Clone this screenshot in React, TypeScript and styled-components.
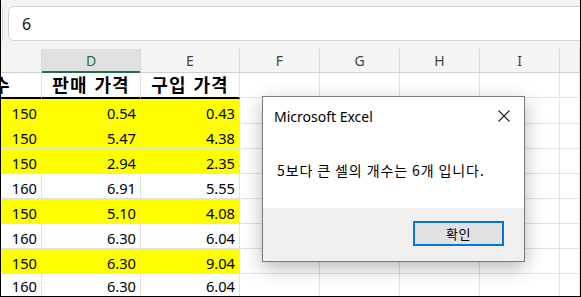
import React from "react";
import styled, { createGlobalStyle } from "styled-components";

const GlobalStyle = createGlobalStyle`
  html, body { margin: 0; padding: 0; background: #fff; }
  * { box-sizing: border-box; }
`;

const COLS = "41px 99px 99px 80px 80px 80px 80px 1fr";
const GRID = "#e1e1e1";
const SANS = `"Noto Sans", "Noto Sans CJK KR", sans-serif`;
const KR = `"Noto Sans CJK KR", "Noto Sans", sans-serif`;

const Frame = styled.div`
  position: relative;
  width: 581px;
  height: 297px;
  overflow: hidden;
  background: #fff;
  border-left: 1px solid #000;
  border-right: 1px solid #000;
  border-bottom: 1px solid #000;
  display: flex;
  flex-direction: column;
`;

const TopBar = styled.div`
  height: 49px;
  flex: none;
  background: #f3f3f3;
  display: flex;
  align-items: flex-start;
  padding-top: 6px;
`;

const NameBoxEdge = styled.div`
  width: 2px;
  height: 35px;
  border: 1px solid #d3d3d3;
  border-left: none;
  border-radius: 0 6px 6px 0;
  background: #fff;
  margin-right: 5px;
`;

const FormulaBox = styled.div`
  flex: 1;
  height: 35px;
  margin-right: -12px;
  background: #fff;
  border: 1px solid #d3d3d3;
  border-radius: 6px;
  display: flex;
  align-items: center;
  padding-left: 13px;
  font-family: ${SANS};
  font-size: 16px;
  color: #111;
`;

const HeaderRow = styled.div`
  display: grid;
  grid-template-columns: ${COLS};
  height: 24px;
  flex: none;
  background: #f5f5f5;
  border-bottom: 1px solid #d0d0d0;
`;

const ColHead = styled.div<{ $sel?: boolean }>`
  display: flex;
  align-items: center;
  justify-content: center;
  border-right: 1px solid #dadada;
  font-family: ${SANS};
  font-size: 14px;
  line-height: 1;
  color: ${(p) => (p.$sel ? "#1e7145" : "#444")};
  background: ${(p) => (p.$sel ? "#e0e0e0" : "transparent")};
  box-shadow: ${(p) => (p.$sel ? "inset 0 -2px 0 #1e7145" : "none")};
  margin-bottom: ${(p) => (p.$sel ? "-1px" : "0")};
`;

const Row = styled.div<{ $h: number }>`
  display: grid;
  grid-template-columns: ${COLS};
  height: ${(p) => p.$h}px;
  flex: none;
`;

const Cell = styled.div<{ $fill?: boolean; $last?: boolean }>`
  display: flex;
  align-items: flex-end;
  justify-content: flex-end;
  padding-right: 4px;
  font-family: ${SANS};
  font-size: 14.67px;
  line-height: 20px;
  color: #000;
  white-space: nowrap;
  background: ${(p) => (p.$fill ? "#ffff00" : "#fff")};
  border-right: 1px solid ${(p) => (p.$fill ? "#ffff00" : GRID)};
  border-bottom: ${(p) => (p.$last ? "none" : `1px solid ${GRID}`)};
`;

const EmptyCell = styled.div<{ $gap?: boolean; $last?: boolean }>`
  border-right: 1px solid ${GRID};
  border-bottom: ${(p) => (p.$last ? "none" : `1px solid ${GRID}`)};
  margin-bottom: ${(p) => (p.$gap ? "1px" : "0")};
`;

const TitleCell = styled.div<{ $clip?: boolean }>`
  display: flex;
  align-items: flex-start;
  justify-content: ${(p) => (p.$clip ? "flex-start" : "center")};
  overflow: ${(p) => (p.$clip ? "hidden" : "visible")};
  white-space: nowrap;
  font-family: ${KR};
  font-weight: 700;
  font-size: 18px;
  line-height: 22px;
  letter-spacing: 1px;
  word-spacing: 2px;
  color: #000;
  border-right: 1px solid ${GRID};
  border-bottom: 2px solid #000;
`;

const ClipText = styled.span`
  margin-left: -8px;
`;

const Dialog = styled.div`
  position: absolute;
  left: 261px;
  top: 96px;
  width: 263px;
  height: 166px;
  background: #fff;
  border: 1px solid #7a7a7a;
  box-shadow: 0 6px 18px rgba(0, 0, 0, 0.28);
  display: flex;
  flex-direction: column;
`;

const DialogTitle = styled.div`
  height: 38px;
  flex: none;
  display: flex;
  align-items: center;
  justify-content: space-between;
  padding: 0 14px 0 11px;
  font-family: ${SANS};
  font-size: 14px;
  color: #000;
`;

const Message = styled.div`
  flex: 1;
  display: flex;
  align-items: center;
  padding: 0 0 3px 14px;
  font-family: ${KR};
  font-size: 14px;
  letter-spacing: 0.9px;
  color: #000;
`;

const Footer = styled.div`
  height: 53px;
  flex: none;
  background: #f0f0f0;
  display: flex;
  justify-content: flex-end;
  align-items: flex-start;
  padding: 13px 20px 0 0;
`;

const OkButton = styled.div`
  width: 91px;
  height: 25px;
  border: 2px solid #0078d7;
  background: #e1e1e1;
  display: flex;
  align-items: center;
  justify-content: center;
  font-family: ${KR};
  font-size: 13px;
  letter-spacing: 0.5px;
  color: #000;
`;

const CloseIcon = () => (
  <svg width="12" height="12" viewBox="0 0 12 12">
    <path d="M0.5 0.5 L11.5 11.5 M11.5 0.5 L0.5 11.5" stroke="#222" strokeWidth="1.1" fill="none" />
  </svg>
);

const data = [
  { c: "150", d: "0.54", e: "0.43", y: true },
  { c: "150", d: "5.47", e: "4.38", y: true },
  { c: "150", d: "2.94", e: "2.35", y: true },
  { c: "160", d: "6.91", e: "5.55", y: false },
  { c: "150", d: "5.10", e: "4.08", y: true },
  { c: "160", d: "6.30", e: "6.04", y: false },
  { c: "150", d: "6.30", e: "9.04", y: true },
  { c: "160", d: "6.30", e: "6.04", y: false },
];

const letters = ["", "D", "E", "F", "G", "H", "I", ""];

export default function App() {
  return (
    <>
      <GlobalStyle />
      <Frame>
        <TopBar>
          <NameBoxEdge />
          <FormulaBox>6</FormulaBox>
        </TopBar>
        <HeaderRow>
          {letters.map((l, i) => (
            <ColHead key={i} $sel={l === "D"}>
              {l}
            </ColHead>
          ))}
        </HeaderRow>
        <Row $h={26}>
          <TitleCell $clip>
            <ClipText>수</ClipText>
          </TitleCell>
          <TitleCell>판매 가격</TitleCell>
          <TitleCell>구입 가격</TitleCell>
          {[0, 1, 2, 3, 4].map((i) => (
            <EmptyCell key={i} $gap />
          ))}
        </Row>
        {data.map((r, idx) => {
          const last = idx === data.length - 1;
          return (
            <Row key={idx} $h={last ? 22 : 25}>
              <Cell $fill={r.y} $last={last}>{r.c}</Cell>
              <Cell $fill={r.y} $last={last}>{r.d}</Cell>
              <Cell $fill={r.y} $last={last}>{r.e}</Cell>
              {[0, 1, 2, 3, 4].map((i) => (
                <EmptyCell key={i} $last={last} />
              ))}
            </Row>
          );
        })}
        <Dialog>
          <DialogTitle>
            <span>Microsoft Excel</span>
            <CloseIcon />
          </DialogTitle>
          <Message>5보다 큰 셀의 개수는 6개 입니다.</Message>
          <Footer>
            <OkButton>확인</OkButton>
          </Footer>
        </Dialog>
      </Frame>
    </>
  );
}
